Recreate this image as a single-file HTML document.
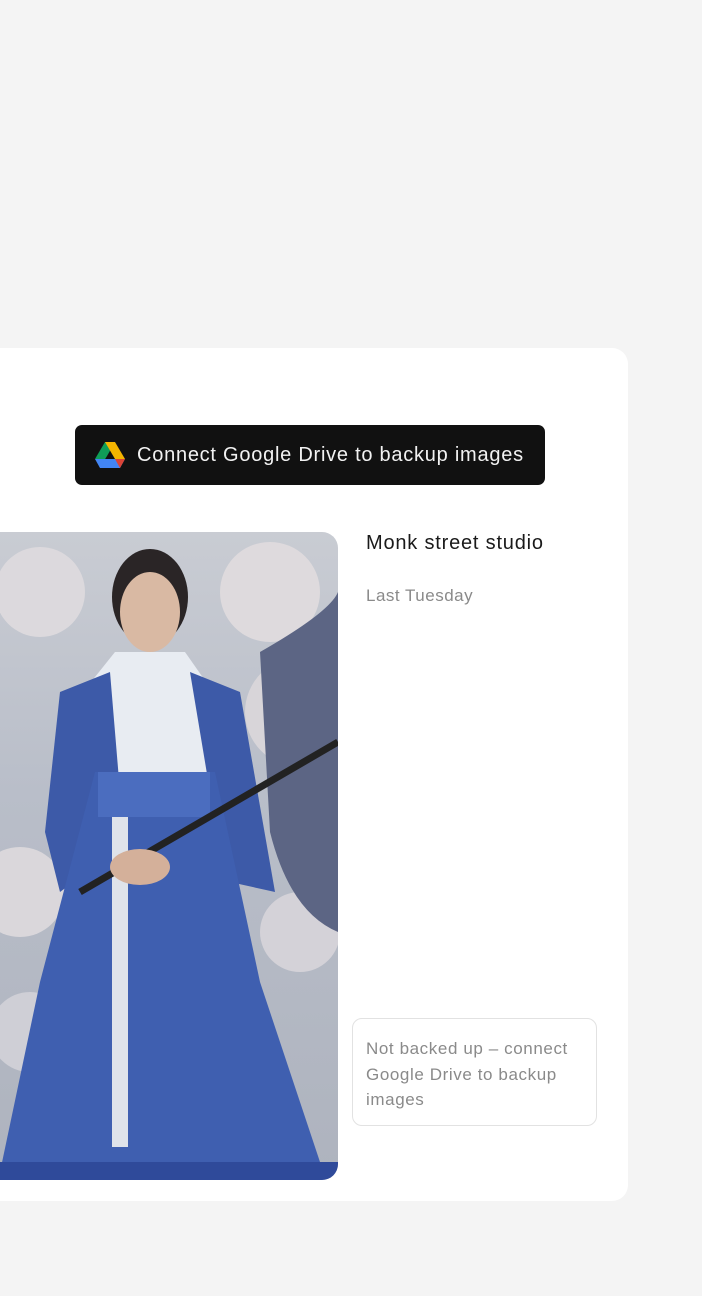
<!DOCTYPE html>
<html><head><meta charset="utf-8"><style>
body{margin:0;width:702px;height:1296px;background:#f4f4f4;font-family:"Liberation Sans",sans-serif;position:relative;overflow:hidden}
.card{position:absolute;left:-20px;top:348px;width:648px;height:853px;background:#fff;border-radius:16px}
.btn{position:absolute;left:75px;top:425px;width:470px;height:60px;background:#111;border-radius:7px;color:#f2f2f2;font-size:20px;letter-spacing:0.75px}
.btn span{position:absolute;left:62px;top:19px}
.img{position:absolute;left:0;top:532px;width:338px;height:648px;border-radius:0 16px 16px 0;overflow:hidden;
background:linear-gradient(180deg,#c9ccd3 0%,#b9bec9 40%,#aeb3be 100%)}
.t1{position:absolute;left:366px;top:532px;font-size:20px;color:#1a1a1a;letter-spacing:0.8px}
.t2{position:absolute;left:366px;top:586px;font-size:17px;color:#8a8a8a;letter-spacing:0.5px}
.box{position:absolute;left:352px;top:1018px;width:245px;height:108px;border:1px solid #e2e2e2;border-radius:10px;box-sizing:border-box}
.box div{position:absolute;left:13px;top:17px;width:228px;font-size:17px;line-height:25.5px;color:#8a8a8a;letter-spacing:0.6px}
</style></head><body>
<div class="card"></div>
<div class="btn">
<svg style="position:absolute;left:20px;top:17px" width="30" height="26" viewBox="0 0 30 26">
<polygon points="10,0 20,0 12,14 7,22 0,17" fill="#0f9d58"/>
<polygon points="10,0 20,0 30,17 20,17" fill="#f4b400"/>
<polygon points="5,17 30,17 25,26 5,26 0,17" fill="#4285f4"/>
<polygon points="20,17 30,17 25,26" fill="#db4437"/>
</svg>
<span>Connect Google Drive to backup images</span></div>
<div class="img">
<svg width="338" height="648" viewBox="0 0 338 648">
<circle cx="40" cy="60" r="45" fill="#dcd9dd"/><circle cx="270" cy="60" r="50" fill="#dedadd"/>
<circle cx="300" cy="180" r="55" fill="#d8d5d9"/><circle cx="20" cy="360" r="45" fill="#dad7db"/>
<circle cx="300" cy="400" r="40" fill="#d4d2d8"/><circle cx="30" cy="500" r="40" fill="#cfcfd6"/>
<path d="M260 120 Q330 80 338 60 L338 400 Q290 380 270 300 Z" fill="#5c6584"/>
<ellipse cx="150" cy="65" rx="38" ry="48" fill="#2a2526"/>
<ellipse cx="150" cy="80" rx="30" ry="40" fill="#d9b9a3"/>
<path d="M115 120 L185 120 L220 170 L225 260 L95 260 L75 170 Z" fill="#e8ecf2"/>
<path d="M60 160 L110 140 L120 260 L100 330 L60 360 L45 300 Z" fill="#3d5aa8"/>
<path d="M190 140 L240 160 L275 360 L230 350 L210 260 Z" fill="#3d5aa8"/>
<path d="M95 240 L215 240 L260 450 L320 630 L0 640 L40 450 Z" fill="#3f5fb0"/>
<rect x="98" y="240" width="112" height="45" fill="#4b6dbf"/>
<rect x="112" y="285" width="16" height="330" fill="#dfe3ea"/>
<path d="M80 360 L338 210" stroke="#222" stroke-width="7"/>
<ellipse cx="140" cy="335" rx="30" ry="18" fill="#d4b09a"/>
<rect x="0" y="630" width="338" height="18" fill="#2f4a9a"/>
</svg></div>
<div class="t1">Monk street studio</div>
<div class="t2">Last Tuesday</div>
<div class="box"><div>Not backed up – connect Google Drive to backup images</div></div>
</body></html>
